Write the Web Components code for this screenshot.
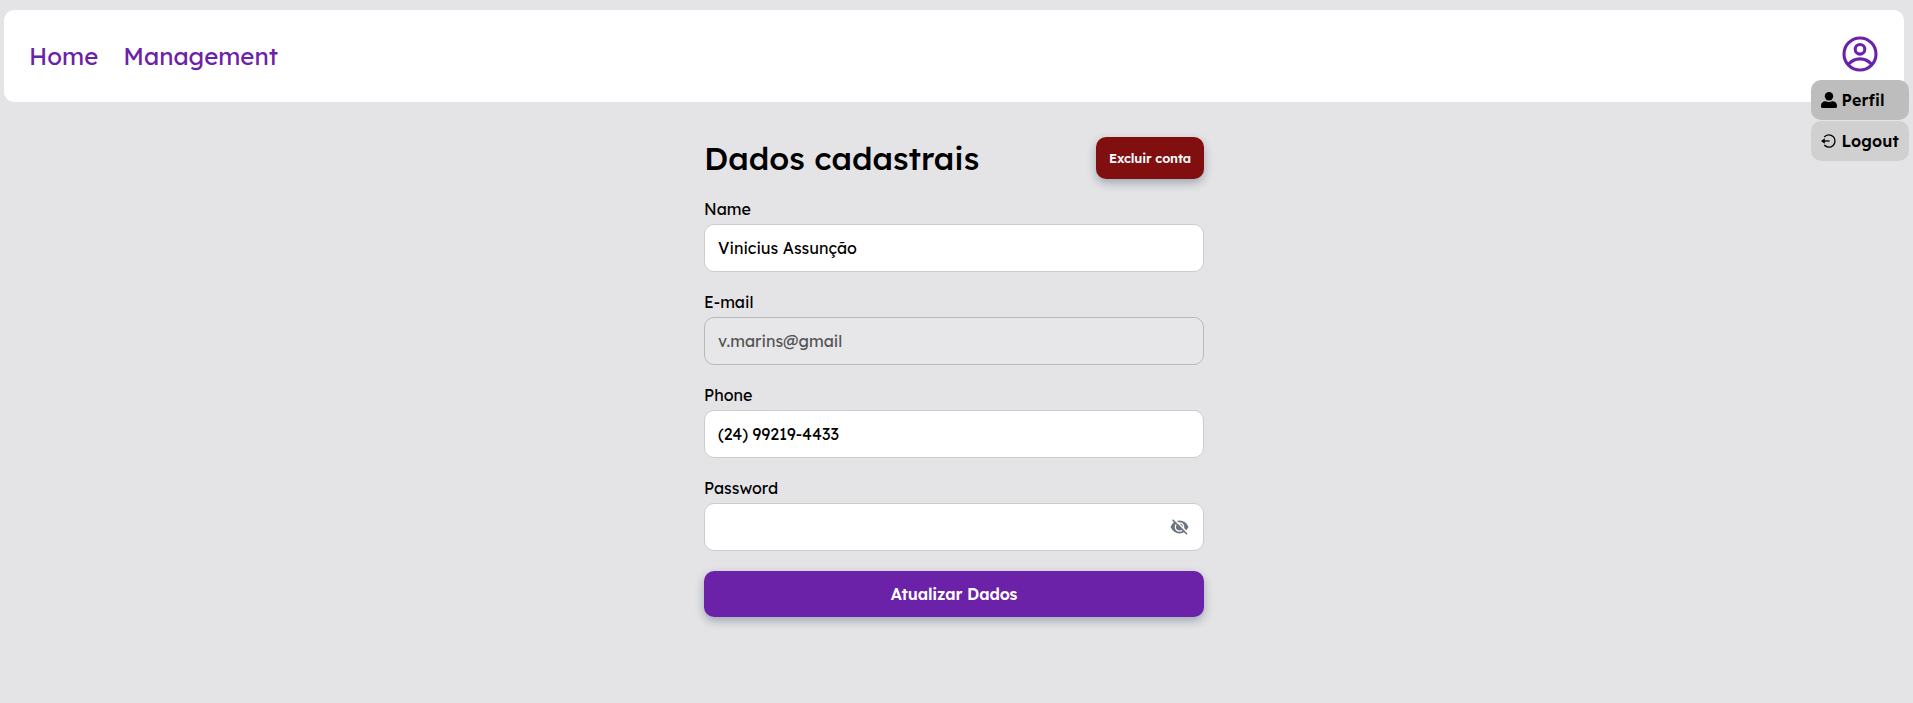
<!DOCTYPE html>
<html lang="pt-BR">
<head>
<meta charset="utf-8">
<title>Dados cadastrais</title>
<style>
html,body{margin:0;height:100%;overflow:hidden;background:#e4e4e6;font-family:Lexend,Inter,"Open Sans",sans-serif;color:#000}
</style>
</head>
<body>
<account-page></account-page>
<script>
const define = (name, html, setup) => customElements.define(name, class extends HTMLElement {
  connectedCallback() {
    if (this.shadowRoot) return;
    this.attachShadow({ mode: 'open' }).innerHTML = html;
    if (setup) setup(this);
  }
});

define('nav-link', `<style>:host{display:block;font-size:24px;font-weight:400;line-height:30px;color:#6b21a8;white-space:nowrap}</style><slot></slot>`);

define('user-icon', `<style>:host{display:block;width:36px;height:36px}svg{display:block}</style>
<svg width="36" height="36" viewBox="0 0 36 36" fill="none" stroke="#6b21a8" stroke-width="3.1"><circle cx="18" cy="18" r="16"/><circle cx="18" cy="13.3" r="4.8"/><path d="M6.2 28.6C9.2 25 13.3 22.9 18 22.9S26.8 25 29.8 28.6"/></svg>`);

define('menu-item', `<style>
:host{display:flex;align-items:center;height:40px;box-sizing:border-box;padding:0 10px;gap:4.5px;border-radius:10px;background:#d0d0d0;font-size:16px;font-weight:600;letter-spacing:.008em;line-height:20px;white-space:nowrap}
:host([active]){background:#bdbdbd}
::slotted(svg){display:block;flex:none}
</style><slot name="icon"></slot><span><slot></slot></span>`);

define('app-header', `<style>
:host{display:flex;position:relative;align-items:center;justify-content:space-between;height:92px;box-sizing:border-box;padding:0 26px 0 25px;margin:10px 9px 0 4px;border-radius:10px;background:#fff}
nav{display:flex;gap:25px}
user-icon{margin-bottom:4px}
.menu{position:absolute;top:70px;right:-5px;width:98px;display:flex;flex-direction:column;gap:1px}
</style>
<nav><nav-link>Home</nav-link><nav-link>Management</nav-link></nav>
<user-icon></user-icon>
<div class="menu">
<menu-item active><svg slot="icon" width="16" height="16" viewBox="0 0 16 16"><circle cx="8" cy="4.2" r="4.2"/><path d="M0 14.4V13.4C0 11 2 9.2 4.4 9.2H4.9C6.8 10.2 9.2 10.2 11.1 9.2H11.6C14 9.2 16 11 16 13.4V14.4Q16 16 14.4 16H1.6Q0 16 0 14.4Z"/></svg>Perfil</menu-item>
<menu-item><svg slot="icon" width="16" height="16" viewBox="0 0 16 16" fill="none" stroke="#000"><path stroke-width="1.3" d="M3.3 4A6.1 6.1 0 1 1 3.3 12"/><path stroke-width="1.3" d="M8.6 8H1.5"/><path fill="#000" stroke="none" d="M0 8L3.8 5.2V10.8Z"/></svg>Logout</menu-item>
</div>`);

define('text-field', `<style>
:host{display:flex;flex-direction:column;height:93px;font-size:16px;font-weight:400;line-height:20px}
label{height:25px}
.box{display:flex;align-items:center;justify-content:space-between;height:48px;box-sizing:border-box;padding:0 13px;border:1px solid #ccc;border-radius:10px;background:#fff}
:host([disabled]) .box{background:#e7e7e9;border-color:#b9b9bb;color:#545454}
</style><label></label><div class="box"><span></span><slot></slot></div>`, el => {
  el.shadowRoot.querySelector('label').textContent = el.getAttribute('label');
  el.shadowRoot.querySelector('span').textContent = el.getAttribute('value') || '';
});

define('action-button', `<style>
:host{display:flex;align-items:center;justify-content:center;box-sizing:border-box;height:46px;border-radius:10px;background:#6b21a8;color:#fff;font-size:16px;font-weight:600;letter-spacing:-.01em;white-space:nowrap;box-shadow:0 4px 10px rgba(0,30,60,.3)}
:host([danger]){width:108px;height:42px;background:#820f0f;font-size:12.8px}
</style><slot></slot>`);

define('account-page', `<style>
:host{display:block}
main{width:500px;margin:35px 0 0 704px}
.head{display:flex;align-items:center;justify-content:space-between;height:42px}
h1{margin:0;font-size:32px;font-weight:500;line-height:40px;white-space:nowrap}
form{margin-top:20px}
text-field:last-of-type{height:73px}
action-button:not([danger]){margin-top:20px}
</style>
<app-header></app-header>
<main><div class="head"><h1>Dados cadastrais</h1><action-button danger>Excluir conta</action-button></div>
<form>
<text-field label="Name" value="Vinicius Assunção"></text-field>
<text-field label="E-mail" value="v.marins@gmail" disabled></text-field>
<text-field label="Phone" value="(24) 99219-4433"></text-field>
<text-field label="Password"><svg width="20" height="16" viewBox="0 0 20 16" fill="none"><path d="M.5 8C2.5 3.7 5.7 1.6 9.5 1.6S16.5 3.7 18.5 8C16.5 12.3 13.3 14.4 9.5 14.4S2.5 12.3 .5 8Z" fill="#6b7580"/><circle cx="9.5" cy="8" r="4.2" fill="#6b7580" stroke="#fff" stroke-width="1.2"/><path d="M3.9 0L18.3 14.4" stroke="#fff" stroke-width="1.6"/><path d="M2.5 .7L16.9 15.1" stroke="#6b7580" stroke-width="1.5"/></svg></text-field>
<action-button>Atualizar Dados</action-button>
</form></main>`);
</script>
</body>
</html>
